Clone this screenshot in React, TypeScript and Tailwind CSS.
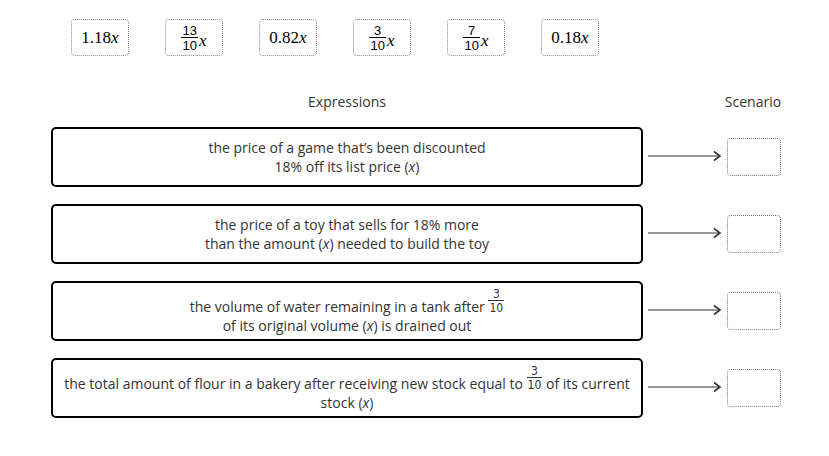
const tiles: { whole?: string; num?: string; den?: string }[] = [
  { whole: "1.18" },
  { num: "13", den: "10" },
  { whole: "0.82" },
  { num: "3", den: "10" },
  { num: "7", den: "10" },
  { whole: "0.18" },
];

function Frac({ num, den, className = "" }: { num: string; den: string; className?: string }) {
  // inline-block baseline = last line (the denominator)
  return (
    <span className={`inline-block text-center leading-none align-baseline ${className}`}>
      <span className="block px-[1px]">{num}</span>
      <span className="block border-t border-current px-[1px] pt-[1px]">{den}</span>
    </span>
  );
}

function Arrow() {
  return (
    <svg width="74" height="12" viewBox="0 0 74 12" className="block">
      <line x1="0" y1="6" x2="72" y2="6" stroke="#333" strokeWidth="1.2" />
      <path d="M66 1.5 L72 6 L66 10.5" fill="none" stroke="#333" strokeWidth="1.6" />
    </svg>
  );
}

const X = () => <i>x</i>;

export default function App() {
  const rows = [
    <>
      the price of a game that’s been discounted
      <br />
      18% off its list price (<X />)
    </>,
    <>
      the price of a toy that sells for 18% more
      <br />
      than the amount (<X />) needed to build the toy
    </>,
    <>
      the volume of water remaining in a tank after{" "}
      <Frac num="3" den="10" className="text-[12px] font-['DejaVu_Sans_Condensed','Liberation_Sans',sans-serif]" />
      <br />
      of its original volume (<X />) is drained out
    </>,
    <>
      the total amount of flour in a bakery after receiving new stock equal to{" "}
      <Frac num="3" den="10" className="text-[12px] font-['DejaVu_Sans_Condensed','Liberation_Sans',sans-serif]" /> of its current
      <br />
      stock (<X />)
    </>,
  ];

  return (
    <div className="w-[829px] h-[456px] bg-white text-[#333] font-['Open_Sans',sans-serif]">
      {/* answer tiles */}
      <div className="flex gap-[36px] pl-[71px] pt-[19px]">
        {tiles.map((t, i) => (
          <div
            key={i}
            className="w-[58px] h-[37px] flex items-center justify-center rounded-[4px] border border-dotted border-[#8a8a8a] text-black font-['Liberation_Serif',serif] text-[17px]"
          >
            {t.whole ? (
              <span>
                {t.whole}
                <i>x</i>
              </span>
            ) : (
              <span className="flex items-end">
                <span className="inline-flex flex-col items-center leading-none font-['Liberation_Sans',sans-serif] text-[13px]">
                  <span className="px-[1px]">{t.num}</span>
                  <span className="border-t border-black px-[1px] pt-[1px]">{t.den}</span>
                </span>
                <i className="leading-none ml-[1px] mb-[3px] font-['Liberation_Serif',serif]">x</i>
              </span>
            )}
          </div>
        ))}
      </div>

      {/* headers */}
      <div className="grid grid-cols-[592px_83px_54px] pl-[51px] mt-[36px] text-[14px] leading-[20px] text-[#333]">
        <div className="text-center">Expressions</div>
        <div />
        <div className="flex justify-center whitespace-nowrap">Scenario</div>
      </div>

      {/* rows */}
      <div className="flex flex-col gap-[17px] pl-[51px] mt-[15px]">
        {rows.map((r, i) => (
          <div key={i} className="flex items-center">
            <div className="w-[592px] h-[60px] flex items-center justify-center text-center rounded-[5px] border-2 border-black px-2 text-[14px] leading-[19px] text-[#333] whitespace-nowrap">
              <div>{r}</div>
            </div>
            <div className="ml-[5px] mr-[5px] mt-[-3px]">
              <Arrow />
            </div>
            <div className="w-[54px] h-[38px] rounded-[4px] border border-dotted border-[#777]" />
          </div>
        ))}
      </div>
    </div>
  );
}
